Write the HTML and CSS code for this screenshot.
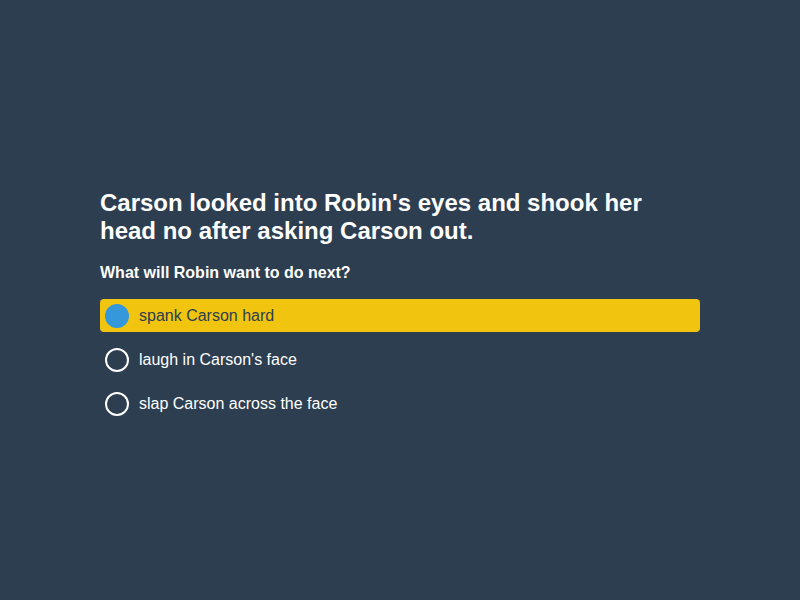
FILE: index.html
```html
<!DOCTYPE html>
<html>
<head>
<meta charset="utf-8">
<link rel="stylesheet" href="styles.css">
</head>
<body>
<main class="page">
  <section class="quiz">
    <h1 class="question">Carson looked into Robin's eyes and shook her head no after asking Carson out.</h1>
    <h2 class="prompt">What will Robin want to do next?</h2>
    <ul class="options">
      <li class="option selected"><span class="radio"></span><span class="label">spank Carson hard</span></li>
      <li class="option"><span class="radio"></span><span class="label">laugh in Carson's face</span></li>
      <li class="option"><span class="radio"></span><span class="label">slap Carson across the face</span></li>
    </ul>
  </section>
</main>
</body>
</html>
```
FILE: styles.css
```css
html, body {
  margin: 0;
  padding: 0;
  background: #2c3e50;
}
body {
  font-family: "Liberation Sans", Arial, sans-serif;
  color: #ffffff;
}
.page {
  box-sizing: border-box;
  height: 600px;
  padding-top: 9px;
  display: flex;
  align-items: center;
  justify-content: center;
}
.quiz {
  width: 600px;
}
.question {
  margin: 0 0 19px 0;
  font-size: 24px;
  line-height: normal;
  font-weight: bold;
}
.prompt {
  margin: 0 0 17px 0;
  font-size: 16px;
  line-height: normal;
  font-weight: bold;
}
.options {
  list-style: none;
  margin: 0;
  padding: 0;
  display: flex;
  flex-direction: column;
  gap: 11px;
}
.option {
  height: 33px;
  display: flex;
  align-items: center;
  gap: 10px;
  padding: 0 5px;
  border-radius: 4px;
  font-size: 16px;
}
.option.selected {
  background: #f1c40f;
  color: #2c3e50;
}
.radio {
  box-sizing: border-box;
  width: 24px;
  height: 24px;
  border: 2px solid #ffffff;
  border-radius: 50%;
  flex: none;
}
.option.selected .radio {
  background: #3498db;
  border-color: #3498db;
}
```
